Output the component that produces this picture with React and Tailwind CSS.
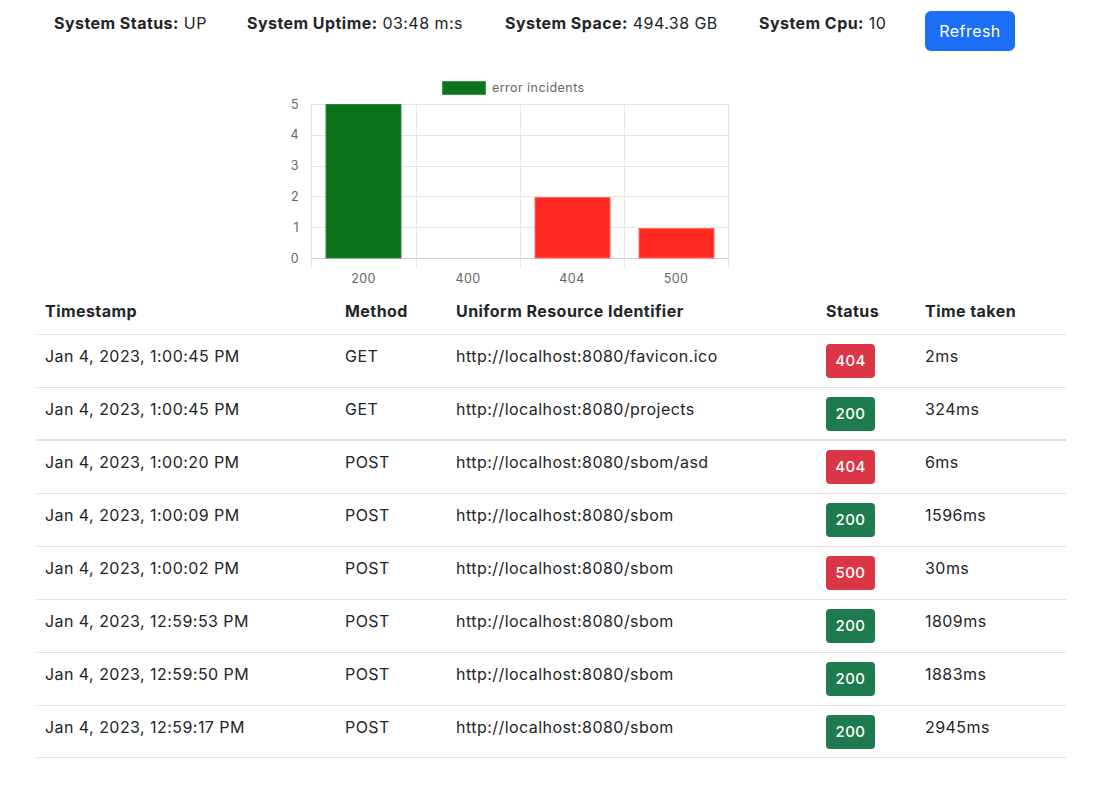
import React from "react";

const rows = [
  ["Jan 4, 2023, 1:00:45 PM", "GET", "http://localhost:8080/favicon.ico", "404", "2ms"],
  ["Jan 4, 2023, 1:00:45 PM", "GET", "http://localhost:8080/projects", "200", "324ms"],
  ["Jan 4, 2023, 1:00:20 PM", "POST", "http://localhost:8080/sbom/asd", "404", "6ms"],
  ["Jan 4, 2023, 1:00:09 PM", "POST", "http://localhost:8080/sbom", "200", "1596ms"],
  ["Jan 4, 2023, 1:00:02 PM", "POST", "http://localhost:8080/sbom", "500", "30ms"],
  ["Jan 4, 2023, 12:59:53 PM", "POST", "http://localhost:8080/sbom", "200", "1809ms"],
  ["Jan 4, 2023, 12:59:50 PM", "POST", "http://localhost:8080/sbom", "200", "1883ms"],
  ["Jan 4, 2023, 12:59:17 PM", "POST", "http://localhost:8080/sbom", "200", "2945ms"],
];

const FONT = "Inter, 'Liberation Sans', sans-serif";

function Chart() {
  const y0 = 188;
  const step = 30.8;
  const grid = "#e5e5e5";
  const vx = [41, 146, 250, 354, 458];
  return (
    <svg width="470" height="223" viewBox="0 0 470 223" className="block">
      <rect x="172.5" y="11.5" width="43" height="13" fill="#0b7219" stroke="#3e9a4c" strokeWidth="1" />
      <text x="222" y="22" fontSize="12.5" fill="#666" fontFamily={FONT}>error incidents</text>
      {[0, 1, 2, 3, 4, 5].map((v) => {
        const y = y0 - v * step;
        return (
          <g key={v}>
            <line x1="41" x2="458" y1={Math.round(y) + 0.5} y2={Math.round(y) + 0.5} stroke={v === 0 ? "#cfcfcf" : grid} strokeWidth="1" />
            <text x="29" y={y + 4.5} fontSize="12.5" fill="#666" textAnchor="end" fontFamily={FONT}>{v}</text>
          </g>
        );
      })}
      {vx.map((x, i) => (
        <line key={i} x1={x + 0.5} x2={x + 0.5} y1="34" y2="198" stroke={grid} strokeWidth="1" />
      ))}
      <rect x="56" y="34.5" width="75" height="153.5" fill="#0b7219" stroke="#2f8a3c" strokeWidth="1" />
      <rect x="265" y="127.5" width="75" height="60.5" fill="#ff2a22" stroke="#ff6a62" strokeWidth="1" />
      <rect x="369" y="158.5" width="75" height="29.5" fill="#ff2a22" stroke="#ff6a62" strokeWidth="1" />
      {[["200", 93.5], ["400", 198], ["404", 302], ["500", 406]].map(([l, x]) => (
        <text key={l} x={x} y="212.5" fontSize="12.5" fill="#666" textAnchor="middle" fontFamily={FONT}>{l}</text>
      ))}
    </svg>
  );
}

export default function App() {
  return (
    <div className="w-[1108px] min-h-[791px] bg-white text-[#212529] text-[16px] leading-6 tracking-[0.45px]" style={{ fontFamily: "Inter, 'Noto Sans', 'Liberation Sans', sans-serif" }}>
      <div className="flex items-start pt-[11px] pl-[54px]">
        <div className="w-[193px] whitespace-nowrap"><span className="font-bold">System Status:</span> UP</div>
        <div className="w-[258px] whitespace-nowrap"><span className="font-bold">System Uptime:</span> 03:48 m:s</div>
        <div className="w-[254px] whitespace-nowrap"><span className="font-bold">System Space:</span> 494.38 GB</div>
        <div className="w-[166px] whitespace-nowrap"><span className="font-bold">System Cpu:</span> 10</div>
        <button className="w-[90px] h-[40px] rounded-md bg-[#1c6ef5] text-white text-[16px] leading-6">Refresh</button>
      </div>
      <div className="ml-[270px] mt-[19px]">
        <Chart />
      </div>
      <table className="ml-[37px] w-[1029px] border-collapse table-fixed">
        <colgroup>
          <col className="w-[300px]" />
          <col className="w-[111px]" />
          <col className="w-[370px]" />
          <col className="w-[99px]" />
          <col className="w-[149px]" />
        </colgroup>
        <thead>
          <tr className="border-b border-[#dee2e6]">
            {["Timestamp", "Method", "Uniform Resource Identifier", "Status", "Time taken"].map((h) => (
              <th key={h} className="text-left font-bold px-2 pt-[6px] pb-[11px] align-bottom">{h}</th>
            ))}
          </tr>
        </thead>
        <tbody>
          {rows.map((r, i) => {
            const pb = i === 1 || i === 7 ? "pb-2" : "pb-[9px]";
            return (
              <tr key={i} className={i === 1 ? "border-b-2 border-[#dbe0e4]" : "border-b border-[#dee2e6]"}>
                <td className={`px-2 pt-[9px] ${pb} align-top whitespace-nowrap`}>{r[0]}</td>
                <td className={`px-2 pt-[9px] ${pb} align-top`}>{r[1]}</td>
                <td className={`px-2 pt-[9px] ${pb} align-top whitespace-nowrap`}>{r[2]}</td>
                <td className={`px-2 pt-[9px] ${pb} align-top`}>
                  <span className={`flex items-center justify-center w-[49px] h-[34px] rounded-[4px] text-white text-[15px] font-medium ${r[3] === "200" ? "bg-[#1e7b4f]" : "bg-[#dc3545]"}`}>{r[3]}</span>
                </td>
                <td className={`px-2 pt-[9px] ${pb} align-top`}>{r[4]}</td>
              </tr>
            );
          })}
        </tbody>
      </table>
    </div>
  );
}
